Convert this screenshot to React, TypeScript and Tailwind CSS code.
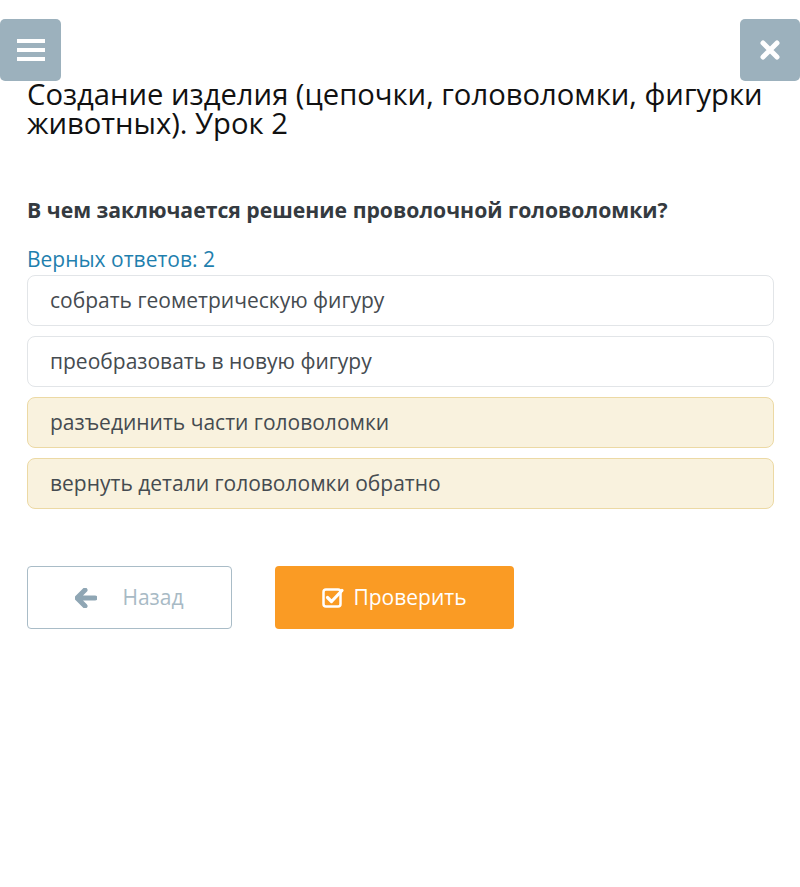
import React from "react";

const options = [
  { text: "собрать геометрическую фигуру", selected: false },
  { text: "преобразовать в новую фигуру", selected: false },
  { text: "разъединить части головоломки", selected: true },
  { text: "вернуть детали головоломки обратно", selected: true },
];

export default function App() {
  return (
    <div
      className="w-[800px] h-[887px] bg-white relative"
      style={{ fontFamily: '"Open Sans", "Noto Sans", sans-serif' }}
    >
      <div className="absolute left-0 top-[19px] w-[61px] h-[62px] bg-[#9cb1bd] rounded-[5px] flex flex-col items-center justify-center gap-[5px]">
        <div className="w-[28px] h-[4px] bg-white" />
        <div className="w-[28px] h-[4px] bg-white" />
        <div className="w-[28px] h-[4px] bg-white" />
      </div>
      <div className="absolute left-[740px] top-[19px] w-[60px] h-[62px] bg-[#9cb1bd] rounded-[5px] flex items-center justify-center">
        <svg width="22" height="22" viewBox="0 0 22 22">
          <path d="M4 4 L18 18 M18 4 L4 18" stroke="white" strokeWidth="5" strokeLinecap="round" />
        </svg>
      </div>

      <div className="px-[27px] pt-[80px]">
        <h1 className="text-[29.2px] leading-[29px] text-[#111] font-normal">
          Создание изделия (цепочки, головоломки, фигурки животных). Урок 2
        </h1>
        <div className="mt-[59px] text-[21.2px] leading-[26px] font-bold text-[#343a40]">
          В чем заключается решение проволочной головоломки?
        </div>
        <div className="mt-[23px] text-[21px] leading-[27px] text-[#1f7fae]">
          Верных ответов: 2
        </div>
        <div className="mt-[2px] flex flex-col gap-[10px] w-[747px]">
          {options.map((o) => (
            <div
              key={o.text}
              className={
                "h-[51px] rounded-[8px] border flex items-center pl-[22px] pt-[1px] text-[21px] text-[#454b50] " +
                (o.selected ? "bg-[#f9f2de] border-[#ecd9a4]" : "bg-white border-[#e2e5e8]")
              }
            >
              {o.text}
            </div>
          ))}
        </div>
        <div className="mt-[57px] flex gap-[43px]">
          <div className="w-[205px] h-[63px] border border-[#a9bcc7] rounded-[4px] flex items-center justify-center gap-[25px] text-[21px] text-[#a8bac5]">
            <svg width="22" height="20" viewBox="0 0 22 20">
              <path d="M10 2 L2 10 L10 18 M3 10 L20 10" stroke="#8fa6b4" strokeWidth="5" strokeLinecap="round" strokeLinejoin="round" fill="none" />
            </svg>
            <span>Назад</span>
          </div>
          <div className="w-[239px] h-[63px] bg-[#fa9b24] rounded-[4px] flex items-center justify-center gap-[8px] text-[21px] text-white">
            <svg width="23" height="21" viewBox="0 0 23 21">
              <rect x="1.5" y="2.5" width="17" height="17" rx="2.5" stroke="white" strokeWidth="2.5" fill="none" />
              <path d="M5.5 10.5 L9.5 14.5 L20 3.5" stroke="white" strokeWidth="3.2" fill="none" strokeLinecap="round" strokeLinejoin="round" />
            </svg>
            <span>Проверить</span>
          </div>
        </div>
      </div>
    </div>
  );
}
